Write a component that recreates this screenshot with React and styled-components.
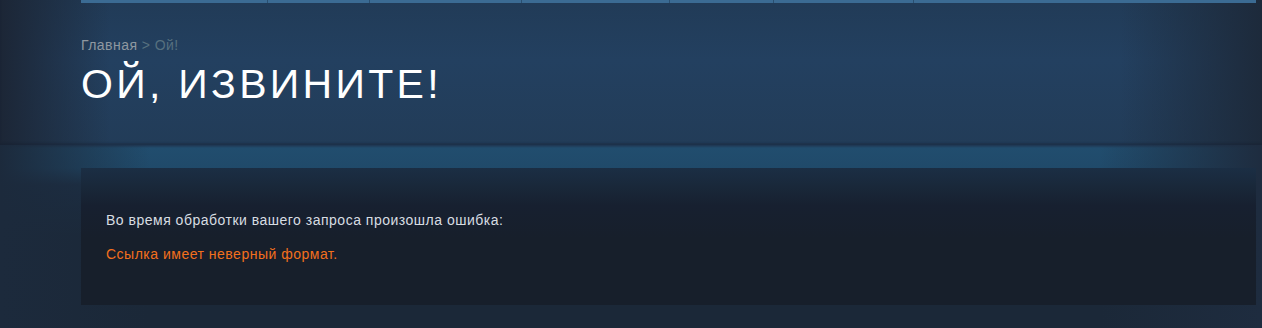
import React from "react";
import styled, { createGlobalStyle } from "styled-components";

const Global = createGlobalStyle`
  html, body { margin: 0; padding: 0; }
  body {
    background: #1b2838;
    font-family: Arial, "Liberation Sans", Helvetica, sans-serif;
    width: 1262px;
    height: 328px;
    overflow: hidden;
  }
`;

const Page = styled.div`
  width: 1262px;
  height: 328px;
  background: #1b2838;
  display: flex;
  flex-direction: column;
`;

const Header = styled.header`
  height: 145px;
  background:
    linear-gradient(to right, #1c2636 0px, rgba(28, 38, 54, 0) 110px, rgba(28, 38, 54, 0) 1120px, #1d2a3b 1262px),
    linear-gradient(to bottom, #213b57 0px, #234060 60px, #223c58 145px);
  box-shadow: inset 0 -2px 2px rgba(20, 30, 45, 0.35);
`;

const HeaderInner = styled.div`
  margin-left: 81px;
  width: 1175px;
  display: flex;
  flex-direction: column;
`;

const NavBar = styled.div`
  display: flex;
  height: 3px;
  background: #3b6b93;
`;

const NavTab = styled.div`
  height: 100%;
  flex: ${(p) => (p.$grow ? "1 1 auto" : "0 0 auto")};
  border-left: ${(p) => (p.$first ? "none" : "1px solid #2a4f70")};
  box-sizing: border-box;
`;

const Breadcrumb = styled.div`
  margin-top: 33px;
  font-size: 14px;
  line-height: 18px;
  letter-spacing: 0.45px;
  color: #8f98a0;
`;

const Crumb = styled.span`
  color: #8f98a0;
`;

const CrumbCurrent = styled.span`
  color: #56707f;
`;

const Title = styled.h1`
  margin: 6px 0 0 0;
  font-size: 41px;
  line-height: 48px;
  font-weight: normal;
  letter-spacing: 3.3px;
  text-transform: uppercase;
  color: #ffffff;
`;

const Content = styled.main`
  flex: 1;
  padding-top: 23px;
  padding-bottom: 23px;
  background:
    linear-gradient(to right, #1c2a3c 0px, rgba(28, 42, 60, 0) 150px, rgba(28, 42, 60, 0) 1100px, #1e2c3f 1262px),
    linear-gradient(to bottom, #1f3550 0px, #214d6e 3px, #204a6a 23px, #1c2f45 40px, #1b2838 90px);
`;

const ErrorBox = styled.section`
  margin-left: 81px;
  width: 1175px;
  box-sizing: border-box;
  padding: 43px 25px 42px;
  background: linear-gradient(to bottom, #1b2e44 0px, #19283a 18px, #172030 38px, #171f2b 70px);
`;

const Message = styled.p`
  margin: 0;
  font-size: 14px;
  line-height: 18px;
  letter-spacing: 0.5px;
  color: ${(p) => (p.$error ? "#f26f1d" : "#d8dde2")};
  & + & {
    margin-top: 16px;
  }
`;

const tabs = [186, 102, 152, 148, 104, 140];

export default function App() {
  return (
    <>
      <Global />
      <Page>
        <Header>
          <HeaderInner>
            <NavBar>
              {tabs.map((w, i) => (
                <NavTab key={i} $first={i === 0} style={{ width: w }} />
              ))}
              <NavTab $grow />
            </NavBar>
            <Breadcrumb>
              <Crumb>Главная</Crumb>
              <CrumbCurrent> &gt; Ой!</CrumbCurrent>
            </Breadcrumb>
            <Title>Ой, извините!</Title>
          </HeaderInner>
        </Header>
        <Content>
          <ErrorBox>
            <Message>Во время обработки вашего запроса произошла ошибка:</Message>
            <Message $error>Ссылка имеет неверный формат.</Message>
          </ErrorBox>
        </Content>
      </Page>
    </>
  );
}
